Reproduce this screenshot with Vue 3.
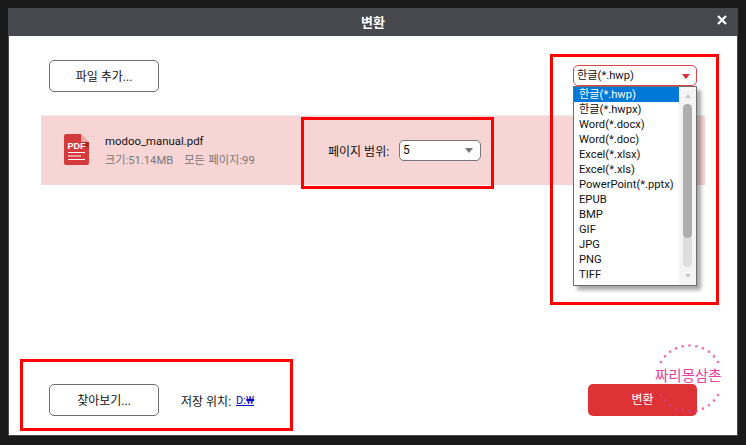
<script setup>
const formats = ['한글(*.hwp)', '한글(*.hwpx)', 'Word(*.docx)', 'Word(*.doc)', 'Excel(*.xlsx)', 'Excel(*.xls)', 'PowerPoint(*.pptx)', 'EPUB', 'BMP', 'GIF', 'JPG', 'PNG', 'TIFF']
const angles = Array.from({ length: 11 }, (_, i) => 30 + i * 12)
const dots = [...angles, ...angles.map(a => a + 180)].map(a => {
  const x = 34.5 + 33 * Math.cos(a * Math.PI / 180)
  const y = 34.5 + 33 * Math.sin(a * Math.PI / 180)
  return { a, x, y, fill: y > 40 && x < 42 ? '#d2407c' : '#f06cb4' }
})
</script>

<template>
  <div class="screen">
    <div class="dialog">
      <header class="title">
        <span>변환</span>
        <svg class="close" width="10" height="10" viewBox="0 0 10 10"><path d="M1 1l8 8M9 1l-8 8" stroke="#fff" stroke-width="2.2" /></svg>
      </header>
      <main class="body">
        <div class="top">
          <button class="btn">파일 추가...</button>
          <div class="select format">
            <span>한글(*.hwp)</span>
            <i class="arrow red"></i>
          </div>
        </div>
        <div class="file">
          <svg class="pdf" width="25" height="31" viewBox="0 0 25 31">
            <path d="M2 0h15v8h8v21a2 2 0 0 1-2 2H2a2 2 0 0 1-2-2V2a2 2 0 0 1 2-2z" fill="#d4393b" />
            <path d="M17 0l8 8h-8z" fill="#f2a5a5" />
            <path d="M17 8h8v6z" fill="#a82628" />
            <text x="3.500" y="15" class="pdf-text">PDF</text>
            <path d="M4 18.500h17M4 22h13M4 25.500h17" stroke="#fff" stroke-width="1" />
          </svg>
          <div class="meta">
            <div class="name">modoo_manual.pdf</div>
            <div class="info"><span>크기:51.14MB</span><span>모든 페이지:99</span></div>
          </div>
          <div class="range">
            <span>페이지 범위:</span>
            <div class="select page">
              <span>5</span>
              <i class="arrow"></i>
            </div>
          </div>
        </div>
        <div class="bottom">
          <button class="btn">찾아보기...</button>
          <span class="save">저장 위치:</span>
          <a class="path">D:₩</a>
          <button class="convert">변환</button>
        </div>

        <div class="menu">
          <ul>
            <li v-for="(f, i) in formats" :key="f" :class="{ on: i === 0 }">{{ f }}</li>
          </ul>
          <div class="track">
            <i class="up"></i>
            <div class="rail"><div class="thumb"></div></div>
            <i class="down"></i>
          </div>
        </div>
      </main>
    </div>

    <div class="mark box-a"></div>
    <div class="mark box-b"></div>
    <div class="mark box-c"></div>

    <div class="stamp">
      <svg width="69" height="69" viewBox="0 0 69 69">
        <circle v-for="d in dots" :key="d.a" :cx="d.x" :cy="d.y" r="1.300" :fill="d.fill" />
      </svg>
      <span>짜리몽삼촌</span>
    </div>
  </div>
</template>

<style>
html, body { margin: 0; background: #1a1a1a; }
</style>

<style scoped>
.screen {
  position: relative;
  width: 746px;
  height: 445px;
  box-sizing: border-box;
  padding: 8px;
  background: #1a1a1a;
  overflow: hidden;
  font-family: Roboto, "Noto Sans CJK KR", sans-serif;
  font-size: 12px;
  color: #111;
}
.dialog {
  height: 428px;
  display: flex;
  flex-direction: column;
  box-sizing: border-box;
  border: 1px solid #4a4b50;
  border-top: 0;
  background: #fff;
}
.title {
  position: relative;
  box-sizing: border-box;
  height: 28px;
  margin: 0 -1px;
  padding-bottom: 1px;
  flex: none;
  display: flex;
  align-items: center;
  justify-content: center;
  background: #47484d;
  color: #fff;
  font-size: 13px;
  font-weight: 700;
}
.close { position: absolute; right: 11px; top: 7px; }
.body {
  position: relative;
  flex: 1;
  display: flex;
  flex-direction: column;
  padding: 24px 40px 0 32px;
}
.top {
  display: flex;
  justify-content: space-between;
  height: 32px;
  padding-left: 8px;
}
.btn {
  width: 110px;
  height: 32px;
  padding: 0 0 2px;
  border: 1px solid #6e6e6e;
  border-radius: 5px;
  background: #fff;
  font: inherit;
  color: #111;
}
.select {
  position: relative;
  box-sizing: border-box;
  background: #fff;
  display: flex;
  align-items: center;
}
.format {
  width: 124px;
  height: 21px;
  margin-top: 5px;
  padding: 0 0 3px 3px;
  border: 1px solid #d9474b;
  border-radius: 5px;
  font-size: 11.200px;
}
.arrow {
  position: absolute;
  right: 7px;
  top: 50%;
  margin-top: -2px;
  border: 4px solid transparent;
  border-top: 5px solid #777;
  border-bottom: 0;
}
.arrow.red { border-top-color: #d92f3a; right: 6px; }
.file {
  display: flex;
  align-items: center;
  height: 69px;
  margin-top: 24px;
  background: #f7d5d5;
  box-shadow: 0 -1px 0 #ececec;
  width: 664px;
}
.pdf { margin-left: 23px; flex: none; margin-top: -2px; }
.pdf-text { font: 700 9px "Liberation Sans", sans-serif; fill: #fff; }
.meta { margin-left: 16px; width: 223px; }
.name { line-height: 17px; color: #111; font-size: 11.400px; }
.info { display: flex; gap: 11px; line-height: 17px; color: #777; margin-top: 2px; font-size: 11.200px; word-spacing: 1px; }
.range { display: flex; align-items: center; gap: 10px; margin-top: -1px; }
.page {
  width: 82px;
  height: 21px;
  padding-left: 3px;
  border: 1px solid #777;
  border-radius: 5px;
}
.bottom {
  display: flex;
  align-items: center;
  margin-top: auto;
  margin-bottom: 19px;
  height: 32px;
  padding-left: 8px;
}
.save { margin-left: 22px; }
.path { margin-left: 5px; color: #00c; text-decoration: underline; font-size: 11px; }
.convert {
  width: 109px;
  height: 32px;
  margin-left: auto;
  padding: 0 0 3px;
  border: 0;
  border-radius: 5px;
  background: #dd3336;
  color: #fff;
  font: inherit;
}
.menu {
  position: absolute;
  left: 564px;
  top: 50px;
  width: 124px;
  height: 200px;
  box-sizing: border-box;
  display: flex;
  background: #fff;
  border: 1px solid #6e6e6e;
  box-shadow: 4px 4px 4px rgba(0, 0, 0, 0.35);
}
.menu ul {
  flex: 1;
  margin: 0;
  padding: 0;
  list-style: none;
  font-size: 11.200px;
}
.menu li { height: 15px; line-height: 15px; padding-left: 5px; white-space: nowrap; }
.menu li.on { background: #0078d7; color: #fff; }
.track {
  width: 17px;
  display: flex;
  flex-direction: column;
  align-items: center;
  background: #f4f4f4;
}
.up, .down { flex: none; border: 3px solid transparent; margin: 7px 0; }
.up { border-bottom: 4px solid #c8c8c8; border-top: 0; margin-bottom: 6px; }
.down { border-top: 4px solid #c8c8c8; border-bottom: 0; }
.rail { flex: 1; width: 9px; border-radius: 5px; background: #dedede; }
.thumb { height: 134px; border-radius: 5px; background: #aeaeae; }
.mark { position: absolute; box-sizing: border-box; border: 3px solid #f00; pointer-events: none; }
.box-a { left: 301px; top: 117px; width: 193px; height: 72px; }
.box-b { left: 550px; top: 54px; width: 169px; height: 251px; }
.box-c { left: 20px; top: 359px; width: 273px; height: 72px; }
.stamp { position: absolute; left: 655px; top: 344px; width: 69px; height: 69px; }
.stamp svg { display: block; }
.stamp span {
  position: absolute;
  left: 0;
  top: 24px;
  font-size: 14.500px;
  line-height: 18px;
  color: #e9419e;
  white-space: nowrap;
}
</style>
